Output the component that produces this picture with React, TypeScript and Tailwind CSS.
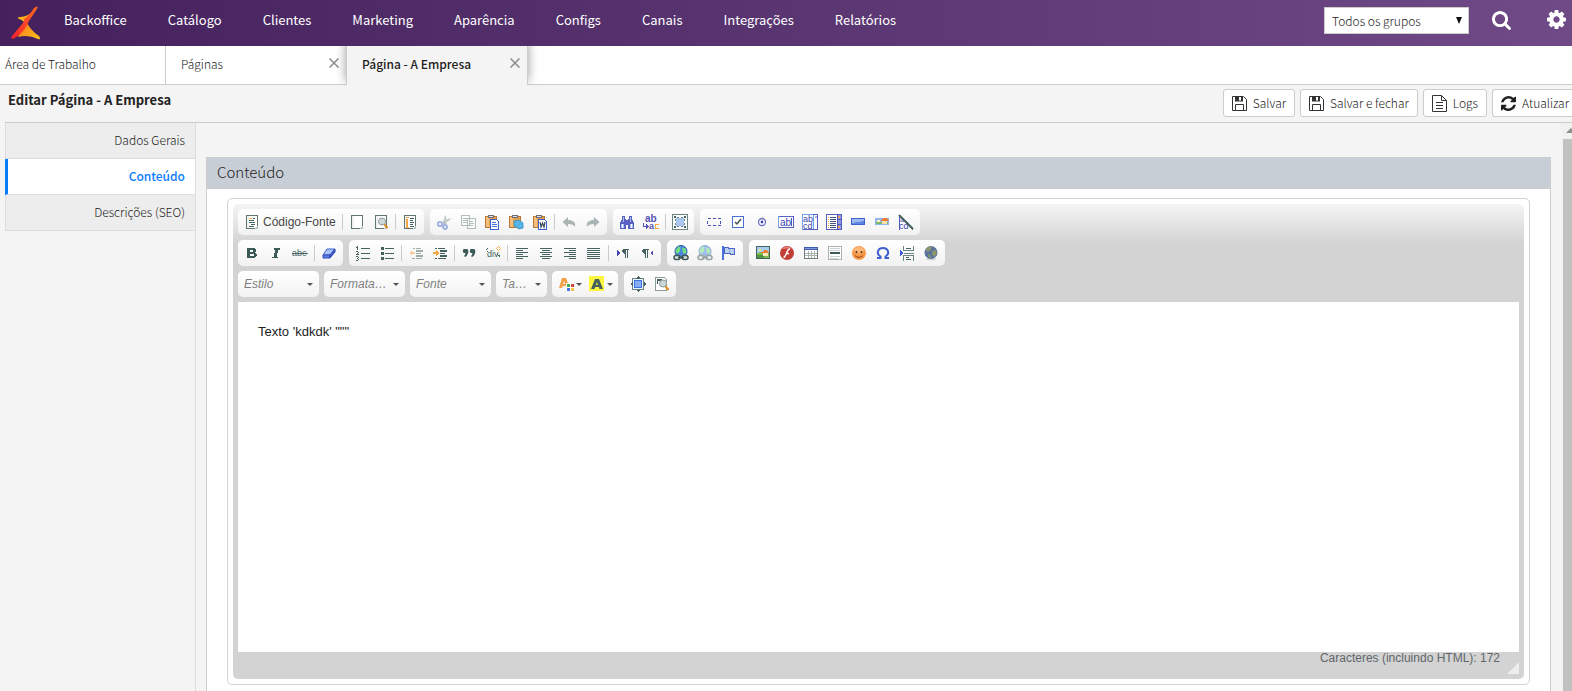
import type { ReactNode } from "react"
import { clsx } from "clsx"

const menu = [
  "Backoffice",
  "Catálogo",
  "Clientes",
  "Marketing",
  "Aparência",
  "Configs",
  "Canais",
  "Integrações",
  "Relatórios"
]

const sections = ["Dados Gerais", "Conteúdo", "Descrições (SEO)"]

const page = (
  <>
    <path d="M2.5 1.5h11v13h-11z" fill="#fff" stroke="#5f7672" />
    <path d="M3 2h2v12H3z" fill="#eef2f1" />
    <path d="M11 14.5h2.5v-2.5z" fill="#b9c6c3" />
  </>
)

const clipboard = (
  <>
    <path d="M1.5 2.5h11v11h-11z" fill="#e9a04d" stroke="#b5763a" />
    <path d="M2 3h3v10h-3z" fill="#f6c07a" />
    <path d="M4 1h6v3h-6z" fill="#6d6d78" />
    <path d="M5 2h4v1h-4z" fill="#dfe0ea" />
  </>
)

const lens = (
  <g shapeRendering="auto">
    <circle cx="9" cy="7.5" r="3.5" fill="#cfd8d8" stroke="#8b9a9a" />
    <path d="M11.5 10.5l3 3.5" stroke="#e08a1e" strokeWidth="2" />
  </g>
)

const globeLink = (
  <g shapeRendering="auto">
    <circle cx="8" cy="6.5" r="6" fill="#4a86e0" stroke="#2c5aa8" />
    <path d="M2.500 5l3-3.500 2 .5-.5 4-2 2.500-2-.5zM9 2.500l3.500 1 1 3.500-1.500 2-2-1z" fill="#6fe07c" />
    <rect x="1" y="10.5" width="6" height="4" rx="2" fill="#dfe7e5" stroke="#3b5552" strokeWidth="1.5" />
    <rect x="9" y="10.5" width="6" height="4" rx="2" fill="#dfe7e5" stroke="#3b5552" strokeWidth="1.5" />
    <path d="M5 12.5h6" stroke="#3b5552" strokeWidth="1.5" />
  </g>
)

const picture = (
  <>
    <path d="M0 0h16v16H0z" fill="#a9cdf0" />
    <path d="M0 9l5-2 4 3 7-1v7H0z" fill="#7cbb4c" />
    <path d="M0 11l8 1 2 4H0z" fill="#4d9440" />
    <path d="M8 8h6v5H8z" fill="#fbe7b8" />
    <path d="M6 8l4-4h3l3 4z" fill="#ee7a35" />
    <circle cx="4" cy="4" r="2" fill="#ffe36b" />
  </>
)

// 16px toolbar glyphs, keyed by the command's label
const glyphs: Record<string, ReactNode> = {
  source: (
    <>
      {page}
      <path d="M5 4h3v1H5z" fill="#f5a742" />
      <path d="M5 6h5v1H5zM5 8h6v1H5zM7 10h4v1H7zM5 12h5v1H5zM9 4h2v1H9z" fill="#45625e" />
    </>
  ),
  "Novo Documento": page,
  Visualizar: (
    <>
      {page}
      {lens}
    </>
  ),
  Modelos: (
    <>
      {page}
      <path d="M4 3h3v1H4zM4 5h2v8H4zM4 13h3v1H4z" fill="#f5a742" />
      <path d="M8 4h4v1H8zM8 6h3v1H8zM8 8h4v1H8zM8 10h3v1H8zM8 12h4v1H8z" fill="#45625e" />
    </>
  ),
  Recortar: (
    <g opacity=".5" shapeRendering="auto">
      <path d="M9 1l1 1v6l-2 2-1-1zM15 4l-1 2-6 4-1-1 2-3z" fill="#8b9a9a" />
      <path d="M7 8l3 2" stroke="#6c7b88" strokeWidth="2" />
      <circle cx="4" cy="10" r="2.2" fill="none" stroke="#4668d4" strokeWidth="1.8" />
      <circle cx="9" cy="13" r="2" fill="none" stroke="#4668d4" strokeWidth="1.8" />
    </g>
  ),
  Copiar: (
    <g opacity=".5">
      <path d="M1.5 1.5h8v10h-8zM7.5 4.5h8v10h-8z" fill="#fff" stroke="#6c8480" />
      <path d="M3 4h4v1H3zM3 6h4v1H3zM3 8h4v1H3zM9 7h4v1H9zM9 9h5v1H9zM9 11h4v1H9z" fill="#6c8480" />
    </g>
  ),
  Colar: (
    <>
      {clipboard}
      <path d="M6.5 5.5h6l2 2v8h-8z" fill="#fff" stroke="#3e63d0" />
      <path d="M8 8h4v1H8zM8 10h5v1H8zM8 12h5v1H8z" fill="#4a6fd6" />
    </>
  ),
  "Colar como Texto": (
    <>
      {clipboard}
      <path d="M6 7l5-1 4 3v5l-4 1-5-3z" fill="#56b5e6" stroke="#338fc2" strokeWidth=".8" shapeRendering="auto" />
    </>
  ),
  "Colar do Word": (
    <>
      {clipboard}
      <path d="M6.5 5.5h6l2 2v8h-8z" fill="#fff" stroke="#3e63d0" />
      <path d="M8 8l1 5 1.500-4 1.500 4 1-5" fill="none" stroke="#33485a" strokeWidth="1.2" shapeRendering="auto" />
    </>
  ),
  Desfazer: <path d="M7 3v3c5 0 8 2 7 7-1-2-3-3-7-3v3L1.500 8z" fill="#a9b5b5" shapeRendering="auto" />,
  Refazer: <path d="M9 3v3C4 6 1 8 2 13c1-2 3-3 7-3v3l5.500-5z" fill="#a9b5b5" shapeRendering="auto" />,
  Localizar: (
    <>
      <path d="M3 2h3v3h1v1h2V5h1V2h3v3l2 4v6H9v-4H7v4H1V9l2-4z" fill="#5a5fc2" />
      <path d="M4 3h1v5H4zM11 3h1v5h-1zM2 10h3v4H2zM11 10h3v4h-3z" fill="#9fc4f2" />
      <path d="M3 10h1v4H3zM12 10h1v4h-1z" fill="#fff" />
    </>
  ),
  Substituir: (
    <>
      <text x="2" y="8" fontSize="10" fontWeight="700" fill="#5352b5" fontFamily="Liberation Sans, sans-serif">ab</text>
      <path d="M0 9h1v3h2v-2l3 2.500L3 15v-2H0z" fill="#5352b5" />
      <text x="6" y="15" fontSize="9" fontWeight="700" fill="#5352b5" fontFamily="Liberation Sans, sans-serif">a</text>
      <path d="M15.500 10.5h-3v4h3" fill="none" stroke="#f5a742" />
    </>
  ),
  "Selecionar Tudo": (
    <>
      <path d="M.5.5h15v15H.5z" fill="#fff" stroke="#6c8480" />
      <path d="M4 4h8v8H4z" fill="#a8c6f0" />
      <path d="M3 5h1v2H3zM3 9h1v2H3zM12 5h1v2h-1zM12 9h1v2h-1zM5 3h2v1H5zM9 3h2v1H9zM5 12h2v1H5zM9 12h2v1H9z" fill="#6c8480" />
      <path d="M2 2h2v2H2zM12 2h2v2h-2zM2 12h2v2H2zM12 12h2v2h-2z" fill="#45625e" />
    </>
  ),
  Formulário: <path d="M1.5 4.5h13v7h-13z" fill="none" stroke="#4a53b8" strokeDasharray="3 2" />,
  "Caixa de Seleção": (
    <>
      <path d="M2.5 2.5h11v11h-11z" fill="#fff" stroke="#4a6fd0" />
      <path d="M5 8l2 2 4-5" fill="none" stroke="#3f5552" strokeWidth="1.5" shapeRendering="auto" />
    </>
  ),
  "Botão de Opção": (
    <g shapeRendering="auto">
      <circle cx="8" cy="8" r="3.5" fill="#fff" stroke="#6b72c4" strokeWidth="1.3" />
      <circle cx="8" cy="8" r="1.4" fill="#3f49b0" />
    </g>
  ),
  "Caixa de Texto": (
    <>
      <path d="M.5 2.5h15v11H.5z" fill="#fff" stroke="#5560c0" />
      <path d="M0 2h1v12H0z" fill="#6fa3ee" />
      <text x="2" y="12" fontSize="10" fill="#3a43b0" fontFamily="Liberation Sans, sans-serif">ab</text>
      <path d="M13 4h1v8h-1z" fill="#4a53b8" />
    </>
  ),
  "Área de Texto": (
    <>
      <path d="M.5.5h15v15H.5z" fill="#fff" stroke="#5560c0" />
      <path d="M0 0h1v16H0zM0 0h11v1H0z" fill="#6fa3ee" />
      <path d="M11 1h1v14h-1z" fill="#6fa3ee" />
      <text x="1" y="8" fontSize="9" fill="#3a43b0" fontFamily="Liberation Sans, sans-serif">ab</text>
      <text x="1" y="15" fontSize="9" fill="#3a43b0" fontFamily="Liberation Sans, sans-serif">cd</text>
      <path d="M13 2h2v2h-2z" fill="#a8b0e0" />
    </>
  ),
  "Caixa de Listagem": (
    <>
      <path d="M.5.5h15v15H.5z" fill="#fff" stroke="#5560c0" />
      <path d="M11 1h4v14h-4z" fill="#8f9be0" />
      <path d="M11 0h1v16h-1zM12 5h3v1h-3zM12 10h3v1h-3z" fill="#4a53b8" />
      <path d="M12 2h2v2h-2zM12 12h2v2h-2z" fill="#f0a050" />
      <path d="M4 3h6v1H4zM4 5h6v1H4zM4 7h6v1H4zM4 9h6v1H4zM4 11h6v1H4zM4 13h6v1H4z" fill="#45557a" />
      <path d="M2 3h1v1H2zM2 5h1v1H2zM2 7h1v1H2zM2 9h1v1H2zM2 11h1v1H2zM2 13h1v1H2z" fill="#f5a742" />
    </>
  ),
  Botão: (
    <>
      <path d="M1 4h14v7H1z" fill="#3f62cc" />
      <path d="M2 5h12v2L2 9z" fill="#9db9f2" />
      <path d="M2 9l12-2v3H2z" fill="#5d86e2" />
    </>
  ),
  "Botão Imagem": (
    <>
      <path d="M1 4h14v7H1z" fill="#8db7ee" />
      <path d="M2 8h12v2H2z" fill="#7cb86c" />
      <path d="M6 7l3-3h3l3 3z" fill="#ee7a35" />
      <path d="M8 7h5v3H8z" fill="#fbe0a8" />
      <path d="M3 6h3v2H3z" fill="#fff0c0" />
    </>
  ),
  "Campo Oculto": (
    <>
      <path d="M1 1l14 15H1z" fill="#fff" stroke="#5560c0" />
      <text x="2" y="8" fontSize="7" fill="#3a43b0" fontFamily="Liberation Sans, sans-serif">a</text>
      <text x="1" y="15" fontSize="9" fill="#3a43b0" fontFamily="Liberation Sans, sans-serif">cd</text>
      <path d="M1 1l14 14" stroke="#45625e" strokeWidth="2" shapeRendering="auto" />
    </>
  ),
  Negrito: (
    <path d="M3 3h7c3 0 3 4 1 4.700 3 .8 2.500 5.300-1 5.300H3zM6 5v2h2.500c1 0 1-2 0-2zM6 9v2h3c1 0 1-2 0-2z" fill="#3c5a56" fillRule="evenodd" />
  ),
  Itálico: <path d="M6 3h6v1.500h-1.500L8.500 11.500H10V13H4v-1.500h1.500l2-7H6z" fill="#3c5a56" />,
  Tachado: (
    <>
      <text x="0" y="11" fontSize="9" fill="#45625e" fontFamily="Liberation Sans, sans-serif">abc</text>
      <path d="M0 8h16v1H0z" fill="#45625e" />
    </>
  ),
  "Remover Formatação": (
    <g shapeRendering="auto">
      <path d="M6 4h8l-5 6H2z" fill="#a9c4f7" stroke="#3f5fd0" />
      <path d="M2 10h7v3H2z" fill="#5d83e8" stroke="#3347b5" />
      <path d="M9 10l5-6v3l-5 6z" fill="#3f5fd0" stroke="#3347b5" />
    </g>
  ),
  "Lista numerada": (
    <path d="M6 3h9v1H6zM6 8h9v1H6zM6 13h9v1H6zM2 1h1v4H2zM1 2h1v1H1zM1 6h2v1H1zM3 7h1v1H3zM2 8h1v1H2zM1 9h3v1H1zM1 11h2v1H1zM3 12h1v1H3zM2 13h1v1H2zM3 14h1v1H3zM1 15h2v1H1z" fill="#45625e" />
  ),
  "Lista sem números": (
    <path d="M6 3h9v1H6zM6 8h9v1H6zM6 13h9v1H6zM2 2h3v3H2zM2 7h3v3H2zM2 12h3v3H2z" fill="#45625e" />
  ),
  "Diminuir Recuo": (
    <g opacity=".5">
      <path d="M5 3h2v1H5zM8 3h5v1H8zM8 5h7v2H8zM8 8h5v1H8zM8 10h7v2H8zM4 13h3v1H4zM8 13h6v1H8z" fill="#45625e" />
      <path d="M1 8l3-3v2h3v2H4v2z" fill="#f5a742" />
    </g>
  ),
  "Aumentar Recuo": (
    <>
      <path d="M3 3h2v1H3zM6 3h7v1H6zM8 5h7v2H8zM8 8h5v1H8zM8 10h7v2H8zM3 13h2v1H3zM6 13h8v1H6z" fill="#45625e" />
      <path d="M7 8L4 5v2H1v2h3v2z" fill="#f5a742" />
    </>
  ),
  Citação: (
    <path d="M3 4h3c2 0 2 6-2 8l-1-1c1-1 1.500-2 1.300-3H3C1.500 8 1.500 4 3 4zM10 4h3c2 0 2 6-2 8l-1-1c1-1 1.500-2 1.300-3H10c-1.500 0-1.500-4 0-4z" fill="#3c5a56" shapeRendering="auto" />
  ),
  "Inserir DIV": (
    <>
      <text x="2" y="12" fontSize="9" fill="#45625e" fontFamily="Liberation Sans, sans-serif">div</text>
      <path d="M3 3L1 5l2 2M12 9l3 2-3 3" fill="none" stroke="#45625e" strokeDasharray="1 1" />
      <path d="M13.5 1.5l2 2-2 2-2-2z" fill="#fff" stroke="#f5a742" shapeRendering="auto" />
    </>
  ),
  "Alinhar Esquerda": <path d="M2 3h12v1H2zM2 5h7v1H2zM2 7h12v1H2zM2 9h7v1H2zM2 11h12v1H2zM2 13h7v1H2z" fill="#45625e" />,
  Centralizar: <path d="M2 3h12v1H2zM4 5h8v1H4zM2 7h12v1H2zM4 9h8v1H4zM2 11h12v1H2zM4 13h8v1H4z" fill="#45625e" />,
  "Alinhar Direita": <path d="M2 3h12v1H2zM7 5h7v1H7zM2 7h12v1H2zM7 9h7v1H7zM2 11h12v1H2zM7 13h7v1H7z" fill="#45625e" />,
  Justificado: <path d="M1 3h13v1H1zM1 5h13v1H1zM1 7h13v1H1zM1 9h13v1H1zM1 11h13v1H1zM1 13h13v1H1z" fill="#45625e" />,
  "Esquerda para Direita": (
    <>
      <path d="M2 5l3 3-3 3z" fill="#4a45b0" />
      <path d="M8 4h6v1h-1v8h-1V5h-1v8h-1V9C6 9 7 4 8 4z" fill="#45625e" />
    </>
  ),
  "Direita para Esquerda": (
    <>
      <path d="M14 5l-3 3 3 3z" fill="#4a45b0" />
      <path d="M4 4h6v1H9v8H8V5H7v8H6V9C2 9 3 4 4 4z" fill="#45625e" />
    </>
  ),
  Link: globeLink,
  "Remover Link": <g opacity=".5">{globeLink}</g>,
  Âncora: (
    <>
      <path d="M1 1h2v14H1z" fill="#4a6fd6" />
      <path d="M3.5 2.5h4v1h6v6h-4v-1h-6z" fill="#bcd0f0" stroke="#4a66c4" />
      <path d="M8 4h1v4H8z" fill="#8ea4dc" />
    </>
  ),
  Imagem: (
    <>
      <path d="M1.5 1.5h13v12h-13z" fill="#fff" stroke="#45625e" />
      <svg x="2" y="2" width="12" height="11" viewBox="0 0 16 16" preserveAspectRatio="none">
        {picture}
      </svg>
    </>
  ),
  Flash: (
    <g shapeRendering="auto">
      <circle cx="8" cy="8" r="7" fill="#c23f38" />
      <path d="M3 4c3-3 8-3 10 0-4-1-7 0-10 0z" fill="#e88278" />
      <path d="M4.500 12.500c3 0 2.500-8.500 6.500-8.500M7 8.500h3" fill="none" stroke="#fff" strokeWidth="1.4" />
    </g>
  ),
  Tabela: (
    <>
      <path d="M1.5 2.5h13v11h-13z" fill="#fff" stroke="#6c7f7c" />
      <path d="M5.5 6v7M8.5 6v7M11.5 6v7M2 8.5h12M2 10.5h12" stroke="#a9b4b2" />
      <path d="M1 2h14v3H1z" fill="#3f5aa8" />
      <path d="M2 3h12v1H2z" fill="#7d97d8" />
    </>
  ),
  "Linha Horizontal": (
    <>
      <path d="M1.5 1.5h13v13h-13z" fill="#fff" stroke="#a9b4b2" />
      <path d="M3 7h10v2H3z" fill="#3c5a56" />
      <path d="M3 3h10v1H3zM3 5h10v1H3zM3 11h10v1H3zM3 13h8v1H3z" fill="#ccd2d1" />
    </>
  ),
  Emoticon: (
    <g shapeRendering="auto">
      <circle cx="8" cy="8" r="7" fill="#f79a4b" />
      <ellipse cx="8" cy="5" rx="5" ry="3" fill="#fbb878" />
      <path d="M5.500 6v2M10.500 6v2" stroke="#5c3420" strokeWidth="1.5" />
      <path d="M4 10.5c2 2.500 6 2.500 8 0" fill="none" stroke="#9c4a1c" strokeWidth="1.2" />
    </g>
  ),
  "Caractere Especial": (
    <path d="M2 13h3.500v-1.500C1 9 2.500 3 8 3s7 6 2.500 8.500V13H14" fill="none" stroke="#3f5fd0" strokeWidth="2" shapeRendering="auto" />
  ),
  "Quebra de Página": (
    <>
      <path d="M1 5l3 3-3 3z" fill="#3f5fd0" />
      <path d="M4.500 1v4.500h10V1M4.500 15.500v-5h10v5M5 8h10" fill="none" stroke="#6c8480" />
      <path d="M7 3h5v1H7zM7 12h3v1H7zM7 14h5v1H7z" fill="#45625e" />
    </>
  ),
  IFrame: (
    <g shapeRendering="auto">
      <ellipse cx="8" cy="14" rx="5" ry="1.500" fill="#d8d8d8" />
      <circle cx="8" cy="7.5" r="6.5" fill="#5a71a0" />
      <path d="M3 4c2-3 5-3 6-2l-1 3-3 2-2-1zM9 6l4-1 1 4-3 3-2-3z" fill="#8a966c" />
      <path d="M5 9l3 1v3l-3-1z" fill="#7c8f70" />
    </g>
  ),
  "Cor do Texto": (
    <>
      <path d="M4 2h4l4 10H9l-.8-2H4.700L4 12H1zM6 5l-.9 3h2z" fill="#f3a04b" fillRule="evenodd" shapeRendering="auto" />
      <path d="M8 7h8v8H8z" fill="#fff" />
      <path d="M9 8h3v3H9z" fill="#3fae49" />
      <path d="M13 8h3v3h-3z" fill="#e0403a" />
      <path d="M9 12h3v3H9z" fill="#3f6ff0" />
      <path d="M13 12h3v3h-3z" fill="#f6c544" />
    </>
  ),
  "Cor do Fundo": (
    <>
      <path d="M0 0h15v15H0z" fill="#fdf53e" />
      <path d="M6 3h4l4 10h-3.500l-.6-2H6.200l-.7 2H2zM8 6l-1 3h2z" fill="#45625e" fillRule="evenodd" shapeRendering="auto" />
    </>
  ),
  Maximizar: (
    <>
      <path d="M2.5 2.5h11v11h-11z" fill="#eaf2ff" stroke="#6c8480" />
      <path d="M4.5 4.5h7v7h-7z" fill="#86b0f2" stroke="#3f6fe0" />
      <path d="M8 0l2.500 2.500h-5zM8 16l2.500-2.500h-5zM0 8l2.500-2.500v5zM16 8l-2.500-2.500v5z" fill="#45625e" />
    </>
  ),
  "Mostrar Blocos": (
    <>
      <path d="M1.5 1.5h9l2 2v11h-11z" fill="#fff" stroke="#8b9a9a" />
      <path d="M3 3h5v2H4v3H3zM6 4h1v4H6z" fill="#45625e" />
      {lens}
    </>
  )
}

const rows = [
  [
    ["Recortar", "Copiar", "Colar", "Colar como Texto", "Colar do Word", "|", "Desfazer", "Refazer"],
    ["Localizar", "Substituir", "|", "Selecionar Tudo"],
    [
      "Formulário",
      "Caixa de Seleção",
      "Botão de Opção",
      "Caixa de Texto",
      "Área de Texto",
      "Caixa de Listagem",
      "Botão",
      "Botão Imagem",
      "Campo Oculto"
    ]
  ],
  [
    ["Negrito", "Itálico", "Tachado", "|", "Remover Formatação"],
    [
      "Lista numerada",
      "Lista sem números",
      "|",
      "Diminuir Recuo",
      "Aumentar Recuo",
      "|",
      "Citação",
      "Inserir DIV",
      "|",
      "Alinhar Esquerda",
      "Centralizar",
      "Alinhar Direita",
      "Justificado",
      "|",
      "Esquerda para Direita",
      "Direita para Esquerda"
    ],
    ["Link", "Remover Link", "Âncora"],
    [
      "Imagem",
      "Flash",
      "Tabela",
      "Linha Horizontal",
      "Emoticon",
      "Caractere Especial",
      "Quebra de Página",
      "IFrame"
    ]
  ]
]

function Glyph({ name }: { name: string }) {
  return (
    <svg viewBox="0 0 16 16" className="size-4 shrink-0" shapeRendering="crispEdges" aria-hidden="true">
      {glyphs[name]}
    </svg>
  )
}

function Group({ children }: { children: ReactNode }) {
  return (
    <div className="flex h-[26px] items-center rounded-[5px] bg-linear-to-b from-white to-[#f2f2f2] px-0.5">
      {children}
    </div>
  )
}

function Separator() {
  return <span className="mx-0.5 h-4 w-px bg-[#ccc]" />
}

function Tool({ name }: { name: string }) {
  return (
    <button type="button" aria-label={name} title={name} className="flex h-6 w-6 items-center justify-center">
      <Glyph name={name} />
    </button>
  )
}

function Tools({ names }: { names: string[] }) {
  return (
    <Group>
      {names.map((name, i) => (name === "|" ? <Separator key={i} /> : <Tool key={name} name={name} />))}
    </Group>
  )
}

function Arrow() {
  return (
    <svg viewBox="0 0 6 3" className="h-[3px] w-1.5 shrink-0" aria-hidden="true">
      <path d="M0 0h6L3 3z" fill="#555" />
    </svg>
  )
}

function ColorTool({ name }: { name: string }) {
  return (
    <button type="button" aria-label={name} title={name} className="flex h-6 w-[31px] items-center gap-0.5 pl-1">
      <Glyph name={name} />
      <Arrow />
    </button>
  )
}

function Combo({ label, title, className }: { label: string; title: string; className: string }) {
  return (
    <div
      className={clsx(
        "relative flex h-[26px] items-center rounded-[5px] bg-linear-to-b from-white to-[#f2f2f2]",
        className
      )}
    >
      <select
        aria-label={title}
        className="h-full w-full appearance-none bg-transparent pl-1.5 text-xs text-[#808080] italic outline-none"
      >
        <option>{label}</option>
      </select>
      <span className="pointer-events-none absolute right-1.5">
        <Arrow />
      </span>
    </div>
  )
}

function SaveIcon() {
  return (
    <svg viewBox="0 0 15 15" className="size-[15px]" aria-hidden="true">
      <path d="M.5.5h11l3 3v11H.5z" fill="#fff" stroke="#333" />
      <path d="M3 0h8v5.500H3z" fill="#333" />
      <path d="M7 1h2v3.500H7z" fill="#fff" />
      <path d="M3.500 14.500v-6h8v6" fill="none" stroke="#333" />
    </svg>
  )
}

function LogIcon() {
  return (
    <svg viewBox="0 0 15 17" className="h-[17px] w-[15px]" aria-hidden="true">
      <path d="M.5.5h9l5 5v11H.5z" fill="#fff" stroke="#333" />
      <path d="M9.5.5v5h5" fill="none" stroke="#333" />
      <path d="M4 7.500h7M4 10.500h7M4 13.500h7" stroke="#333" />
    </svg>
  )
}

function RefreshIcon() {
  return (
    <svg viewBox="128 128 1536 1536" className="size-[15px]" fill="currentColor" aria-hidden="true">
      <path d="M1639 1056q0 5-1 7-64 268-268 434.500t-478 166.500q-146 0-282.500-55t-243.500-157l-129 129q-19 19-45 19t-45-19-19-45v-448q0-26 19-45t45-19h448q26 0 45 19t19 45-19 45l-137 137q71 66 161 102t187 36q134 0 250-65t186-179q11-17 53-117 8-23 30-23h192q13 0 22.500 9.500t9.500 22.500zm25-800v448q0 26-19 45t-45 19h-448q-26 0-45-19t-19-45 19-45l138-138q-148-137-349-137-134 0-250 65t-186 179q-11 17-53 117-8 23-30 23h-199q-13 0-22.500-9.500t-9.500-22.500v-7q65-268 270-434.500t480-166.500q146 0 284 55.500t245 156.500l130-129q19-19 45-19t45 19 19 45z" />
    </svg>
  )
}

function ActionButton({ icon, label, className }: { icon: ReactNode; label: string; className?: string }) {
  return (
    <button
      type="button"
      className={clsx(
        "flex h-7 items-center gap-1.5 border border-[#ccc] bg-white pl-2 text-xs font-light whitespace-nowrap text-[#222]",
        className ?? "rounded-[3px] pr-2"
      )}
    >
      {icon}
      {label}
    </button>
  )
}

function Logo() {
  return (
    <svg viewBox="0 0 30 34" className="h-[34px] w-[30px]" aria-hidden="true">
      <defs>
        <linearGradient id="blade" x1="0" y1="1" x2="1" y2="0">
          <stop offset="0" stopColor="#f5212d" />
          <stop offset="1" stopColor="#ff6a1f" />
        </linearGradient>
        <linearGradient id="wing" x1="0" y1="0" x2="1" y2="1">
          <stop offset="0" stopColor="#f7701f" />
          <stop offset="1" stopColor="#ffc61a" />
        </linearGradient>
      </defs>
      <path d="M7 12.500q-1-1.500 2-1.500 8-.5 12-5l-7 12q0-3-7-5.500z" fill="#fbb01c" />
      <path d="M15 15q4 9 13 15 2.500 4-1 3-10-5-20-2z" fill="url(#wing)" />
      <path d="M23 2q4-3 3.500 0L18 15q-5 12-15 17.500-4 1-2-2.500l11-13q2-2 1-4 5-3 10-11z" fill="url(#blade)" />
    </svg>
  )
}

function CloseButton() {
  return (
    <button type="button" aria-label="Fechar aba" className="mb-0.5 p-0.5">
      <svg viewBox="0 0 10 10" className="size-2.5" aria-hidden="true">
        <path d="M.5.5l9 9M9.500.5l-9 9" stroke="#8a8a8a" strokeWidth="1.5" />
      </svg>
    </button>
  )
}

function Header() {
  return (
    <header className="flex h-[46px] shrink-0 items-center bg-linear-to-r from-[#44205c] to-[#6f4a86] pr-1.5 pl-[11px] text-white">
      <a href="#" aria-label="Início">
        <Logo />
      </a>
      <nav className="mb-1.5 ml-[23px] flex gap-[41px] text-[13px]">
        {menu.map((item) => (
          <a key={item} href="#" className="leading-5">
            {item}
          </a>
        ))}
      </nav>
      <div className="relative mb-[5px] ml-auto flex h-[27px] w-[145px] items-center">
        <select
          aria-label="Grupo"
          className="h-full w-full appearance-none border border-[#ccc] bg-white pl-[7px] text-xs font-light text-[#222] outline-none"
        >
          <option>Todos os grupos</option>
        </select>
        <svg viewBox="0 0 6 7" className="pointer-events-none absolute right-[7px] h-[7px] w-1.5" aria-hidden="true">
          <path d="M0 0h6L3 7z" fill="#111" />
        </svg>
      </div>
      <button type="button" aria-label="Buscar" className="mb-[5px] ml-[23px]">
        <svg viewBox="0 128 1664 1664" className="size-[19px]" fill="currentColor" aria-hidden="true">
          <path d="M1152 832q0-185-131.500-316.500t-316.500-131.500-316.500 131.500-131.500 316.500 131.500 316.500 316.500 131.500 316.500-131.500 131.500-316.500zm512 832q0 52-38 90t-90 38q-54 0-90-38l-343-342q-179 124-399 124-143 0-273.500-55.500t-225-150-150-225-55.500-273.500 55.500-273.500 150-225 225-150 273.500-55.500 273.500 55.500 225 150 150 225 55.500 273.500q0 220-124 399l343 343q37 37 37 90z" />
        </svg>
      </button>
      <button type="button" aria-label="Configurações" className="mb-[7px] ml-9">
        <svg viewBox="0 128 1536 1536" className="size-[19px]" fill="currentColor" aria-hidden="true">
          <path d="M1024 896q0-106-75-181t-181-75-181 75-75 181 75 181 181 75 181-75 75-181zm512-109v222q0 12-8 23t-20 13l-185 28q-19 54-39 91 35 50 107 138 10 12 10 25t-9 23q-27 37-99 108t-94 71q-12 0-26-9l-138-108q-44 23-91 38-16 136-29 186-7 28-36 28h-222q-14 0-24.500-8.500t-11.500-21.500l-28-184q-49-16-90-37l-141 107q-10 9-25 9-14 0-25-11-126-114-165-168-7-10-7-23 0-12 8-23 15-21 51-66.500t54-70.500q-27-50-41-99l-183-27q-13-2-21-12.500t-8-23.500v-222q0-12 8-23t19-13l186-28q14-46 39-92-40-57-107-138-10-12-10-24 0-10 9-23 26-36 98.500-107.500t94.500-71.500q13 0 26 10l138 107q44-23 91-38 16-136 29-186 7-28 36-28h222q14 0 24.500 8.500t11.500 21.500l28 184q49 16 90 37l142-107q9-9 24-9 13 0 25 10 129 119 165 170 7 8 7 22 0 12-8 23-15 21-51 66.500t-54 70.500q26 50 41 98l183 28q13 2 21 12.500t8 23.500z" />
        </svg>
      </button>
    </header>
  )
}

function Tabs() {
  return (
    <div className="flex h-[39px] shrink-0 overflow-hidden bg-white text-xs font-light text-[#222]">
      <div className="flex w-[166px] items-center border-r border-b border-[#ccc] pb-0.5 pl-[5px]">
        <a href="#">Área de Trabalho</a>
      </div>
      <div className="flex w-[180px] items-center justify-between border-b border-[#ccc] pr-[5px] pb-0.5 pl-[15px]">
        <a href="#">Páginas</a>
        <CloseButton />
      </div>
      <div className="z-10 flex w-[182px] items-center justify-between border-x border-[#ccc] bg-[#f4f4f4] pr-[5px] pb-[3px] pl-[15px] font-medium shadow-[0_-4px_10px_rgba(0,0,0,0.4)]">
        <a href="#">Página - A Empresa</a>
        <CloseButton />
      </div>
      <div className="flex-1 border-b border-[#ccc]" />
    </div>
  )
}

function Editor() {
  return (
    <div className="rounded-[5px] border border-[#d3d3d3] bg-white p-[5px]">
      <div className="rounded-[5px] bg-[#d3d3d3] bg-linear-to-b from-[#f5f5f5] to-[#d3d3d3] to-[40px] px-[5px] pt-[5px] font-['Liberation_Sans',Arial,sans-serif]">
        <div className="flex flex-col gap-[5px] pb-[5px]">
          <div className="flex flex-wrap gap-1.5">
            <Group>
              <button
                type="button"
                className="flex h-6 items-center gap-[3px] px-1 text-xs whitespace-nowrap text-[#474747]"
              >
                <Glyph name="source" />
                Código-Fonte
              </button>
              <Separator />
              <Tool name="Novo Documento" />
              <Tool name="Visualizar" />
              <Separator />
              <Tool name="Modelos" />
            </Group>
            {rows[0].map((names) => (
              <Tools key={names[0]} names={names} />
            ))}
          </div>
          <div className="flex flex-wrap gap-1.5">
            {rows[1].map((names) => (
              <Tools key={names[0]} names={names} />
            ))}
          </div>
          <div className="flex flex-wrap gap-[5px]">
            <Combo label="Estilo" title="Estilo" className="w-[81px]" />
            <Combo label="Formata…" title="Formatação" className="w-[81px]" />
            <Combo label="Fonte" title="Fonte" className="w-[81px]" />
            <Combo label="Ta…" title="Tamanho" className="w-[51px]" />
            <div className="flex gap-1.5">
              <Group>
                <ColorTool name="Cor do Texto" />
                <ColorTool name="Cor do Fundo" />
              </Group>
              <Tools names={["Maximizar", "Mostrar Blocos"]} />
            </div>
          </div>
        </div>
        <textarea
          aria-label="Conteúdo da página"
          defaultValue={`Texto 'kdkdk' """`}
          className="block h-[350px] w-full resize-none bg-white p-5 text-[13px] leading-5 text-[#222] outline-none"
        />
        <div className="flex h-[27px] justify-end gap-[7px] text-xs leading-[13px] text-[#60676a]">
          <span>Caracteres (incluindo HTML): 172</span>
          <svg viewBox="0 0 12 12" className="mt-2.5 size-3" aria-hidden="true">
            <path d="M12 0v12H0z" fill="#ededed" />
          </svg>
        </div>
      </div>
    </div>
  )
}

export default function App() {
  return (
    <div className="flex h-screen flex-col overflow-hidden bg-[#f4f4f4] font-['Noto_Sans_CJK_SC',sans-serif] text-[#333]">
      <Header />
      <Tabs />
      <div className="flex h-[37px] shrink-0 justify-between overflow-hidden pl-2">
        <h1 className="pt-1 text-[13px] leading-[22px] font-bold text-[#222]">Editar Página - A Empresa</h1>
        <div className="flex gap-[5px] pt-1">
          <ActionButton icon={<SaveIcon />} label="Salvar" />
          <ActionButton icon={<SaveIcon />} label="Salvar e fechar" />
          <ActionButton icon={<LogIcon />} label="Logs" />
          <ActionButton icon={<RefreshIcon />} label="Atualizar" className="rounded-l-[3px] border-r-0 pr-[3px]" />
        </div>
      </div>
      <div className="ml-[5px] flex min-h-0 flex-1 border-t border-[#ccc]">
        <nav className="w-[191px] shrink-0 border-r border-[#ddd] text-xs font-light">
          {sections.map((section) => (
            <a
              key={section}
              href="#"
              className={clsx(
                "flex h-9 items-center justify-end border-b border-b-[#ddd] pr-2.5 pb-px",
                section === "Conteúdo"
                  ? "border-l-3 border-l-[#0a7cff] bg-white font-medium text-[#0a7cff]"
                  : "border-l border-l-[#ddd] bg-[#ededed] text-[#222]"
              )}
            >
              {section}
            </a>
          ))}
        </nav>
        <main className="min-w-0 flex-1 overflow-hidden px-2.5 pt-[34px]">
          <section className="border border-[#ccc] bg-white">
            <h2 className="flex h-[31px] items-center border-b border-[#ccc] bg-[#c8ced5] pb-0.5 pl-2.5 text-[15px] font-light text-[#222]">
              Conteúdo
            </h2>
            <div className="px-5 pt-[9px] pb-10">
              <Editor />
            </div>
          </section>
        </main>
        <div className="flex w-[11px] shrink-0 flex-col overflow-hidden bg-[#f1f1f1] pl-0.5" aria-hidden="true">
          <svg viewBox="0 0 9 16" className="h-4 w-[9px] shrink-0">
            <path d="M3 10h10L8 5z" fill="#8f8f8f" />
          </svg>
          <div className="flex-1 bg-[#c1c1c1]" />
        </div>
      </div>
    </div>
  )
}
